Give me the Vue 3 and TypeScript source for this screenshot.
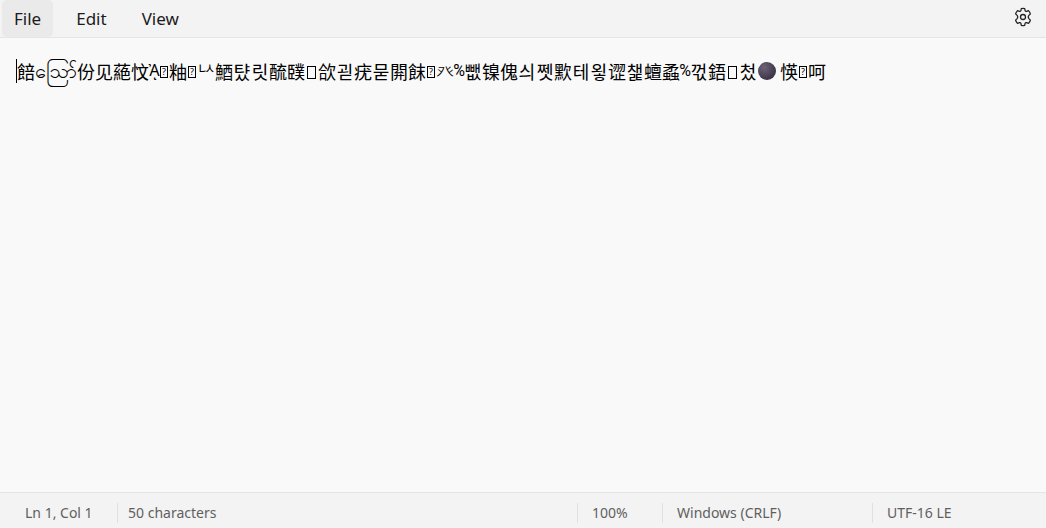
<script setup lang="ts">
import { ref } from 'vue'

type Kind = 'han' | 'sc' | 'kr' | 'jamo' | 'radical' | 'latin' | 'burmese' | 'unknown' | 'empty' | 'moon'
interface Glyph {
  kind: Kind
  text: string
}

const g = (kind: Kind, text = ''): Glyph => ({ kind, text })
const run = (kind: Kind, text: string): Glyph[] => Array.from(text).map((c) => g(kind, c))

const line: Glyph[] = [
  g('han', '餢'),
  g('burmese', 'ဪ'),
  ...run('sc', '份见蕝忟'),
  g('latin', 'ᾈ'),
  g('unknown', '?'),
  g('han', '粙'),
  g('unknown', '?'),
  g('jamo', 'ᅛ'),
  g('sc', '鯂'),
  ...run('kr', '턌릿'),
  ...run('sc', '酼䑑'),
  g('empty'),
  g('han', '欱'),
  g('kr', '괻'),
  g('sc', '疣'),
  g('kr', '묻'),
  g('han', '閞'),
  g('sc', '䬴'),
  g('unknown', '?'),
  g('radical', '癶'),
  g('latin', '%'),
  g('kr', '뺎'),
  ...run('sc', '镍傀'),
  ...run('kr', '싀쩻'),
  g('sc', '㱄'),
  ...run('kr', '테욓'),
  g('sc', '䜧'),
  g('kr', '챑'),
  ...run('sc', '蟺蟊'),
  g('latin', '%'),
  g('kr', '꺿'),
  g('han', '鋙'),
  g('empty'),
  g('kr', '첬'),
  g('moon'),
  g('sc', '愥'),
  g('unknown', '?'),
  g('sc', '呵'),
]

const menus = ['File', 'Edit', 'View']
const active = ref('File')
</script>

<template>
  <div class="window">
    <header class="menubar">
      <nav class="menus">
        <button
          v-for="m in menus"
          :key="m"
          type="button"
          class="menu"
          :class="{ active: m === active }"
          @click="active = m"
        >{{ m }}</button>
      </nav>
      <button type="button" class="settings" aria-label="Settings">
        <svg width="20" height="20" viewBox="0 0 20 20" fill="none" stroke="#242424" stroke-width="1.3" stroke-linejoin="round">
          <path d="M8.3 1.6Q10 1.2 11.7 1.6L12.1 3.6Q12.4 4.5 13.5 4.3L15.5 3.6Q16.9 5 17.4 6.9L15.9 8.4Q14.7 10 15.9 11.6L17.4 13.1Q16.9 15 15.5 16.4L13.5 15.7Q12.4 15.5 12.1 16.4L11.7 18.4Q10 18.8 8.3 18.4L7.9 16.4Q7.6 15.5 6.5 15.7L4.5 16.4Q3.1 15 2.6 13.1L4.1 11.6Q5.3 10 4.1 8.4L2.6 6.9Q3.1 5 4.5 3.6L6.5 4.3Q7.6 4.5 7.9 3.6Z" />
          <circle cx="10" cy="10" r="2.5" />
        </svg>
      </button>
    </header>

    <main class="editor" role="textbox" aria-label="Text editor" aria-multiline="true" tabindex="0">
      <span class="caret"></span>
      <span v-for="(c, i) in line" :key="i" class="glyph" :class="c.kind">{{ c.text }}</span>
    </main>

    <footer class="status">
      <span class="cell position">Ln 1, Col 1</span>
      <span class="cell count">50 characters</span>
      <span class="cell zoom">100%</span>
      <span class="cell ending">Windows (CRLF)</span>
      <span class="cell encoding">UTF-16 LE</span>
    </footer>
  </div>
</template>

<style>
body {
  margin: 0;
}
</style>

<style scoped>
.window {
  display: flex;
  flex-direction: column;
  min-height: 100vh;
  background: #f9f9f9;
  color: #1b1b1b;
  font-family: "Noto Sans", "Open Sans", sans-serif;
}
.menubar {
  display: flex;
  justify-content: space-between;
  align-items: flex-start;
  box-sizing: border-box;
  height: 38px;
  padding: 0 13px 0 2px;
  background: #f3f3f3;
  border-bottom: 1px solid #e5e5e5;
}
.menus {
  display: flex;
  gap: 11px;
}
.menu {
  height: 37px;
  padding: 0 12px;
  border: 0;
  border-radius: 5px;
  background: transparent;
  color: inherit;
  font: 17px "Noto Sans", sans-serif;
}
.menu.active {
  background: #eaeaea;
}
.settings {
  display: flex;
  margin-top: 7px;
  padding: 0;
  border: 0;
  background: transparent;
}
.editor {
  display: flex;
  flex: 1;
  flex-wrap: wrap;
  align-content: flex-start;
  align-items: center;
  padding: 21px 16px;
  outline: 0;
  color: #000;
  font-size: 18px;
  line-height: 24px;
}
.caret {
  width: 1px;
  height: 24px;
  background: #000;
}
.glyph {
  display: flex;
  justify-content: center;
  width: 18px;
  height: 24px;
  white-space: pre;
}
.han {
  font-family: "Noto Sans CJK TC", sans-serif;
}
.sc {
  font-family: "Noto Sans CJK SC", sans-serif;
}
.kr {
  font-family: "Noto Sans CJK KR", sans-serif;
}
.jamo {
  font-family: "Noto Sans CJK KR", sans-serif;
  font-size: 22px;
  font-weight: 300;
}
.radical {
  font-family: "Noto Sans CJK SC", sans-serif;
  font-weight: 300;
}
.latin {
  width: 10px;
  font-family: Roboto, "Noto Sans", sans-serif;
  font-size: 16px;
}
.burmese {
  width: 42px;
  font-size: 20px;
}
.unknown {
  box-sizing: border-box;
  width: 8px;
  height: 12px;
  margin: 2px 1px 0;
  border: 1px solid #000;
  font-size: 9px;
  line-height: 10px;
}
.empty {
  box-sizing: border-box;
  width: 9px;
  height: 13px;
  margin: 2px 2px 0;
  border: 1px solid #000;
}
.moon {
  width: 18px;
  height: 18px;
  margin: 0 4px 0 1px;
  border-radius: 50%;
  background: radial-gradient(circle at 35% 30%, #6d6377, #463c50 60%, #2e2737);
}
.status {
  display: flex;
  align-items: center;
  box-sizing: border-box;
  height: 36px;
  padding: 4px 0 0 16px;
  background: #f3f3f3;
  border-top: 1px solid #e5e5e5;
  color: #5f5f5f;
  font-size: 14px;
}
.cell {
  box-sizing: border-box;
  height: 20px;
  padding-left: 14px;
  border-left: 1px solid #e0e0e0;
  line-height: 20px;
  white-space: nowrap;
}
.position {
  width: 101px;
  padding-left: 9px;
  border-left: 0;
}
.count {
  flex: 1;
  padding-left: 10px;
}
.zoom {
  width: 85px;
}
.ending {
  width: 210px;
}
.encoding {
  width: 174px;
}
</style>
